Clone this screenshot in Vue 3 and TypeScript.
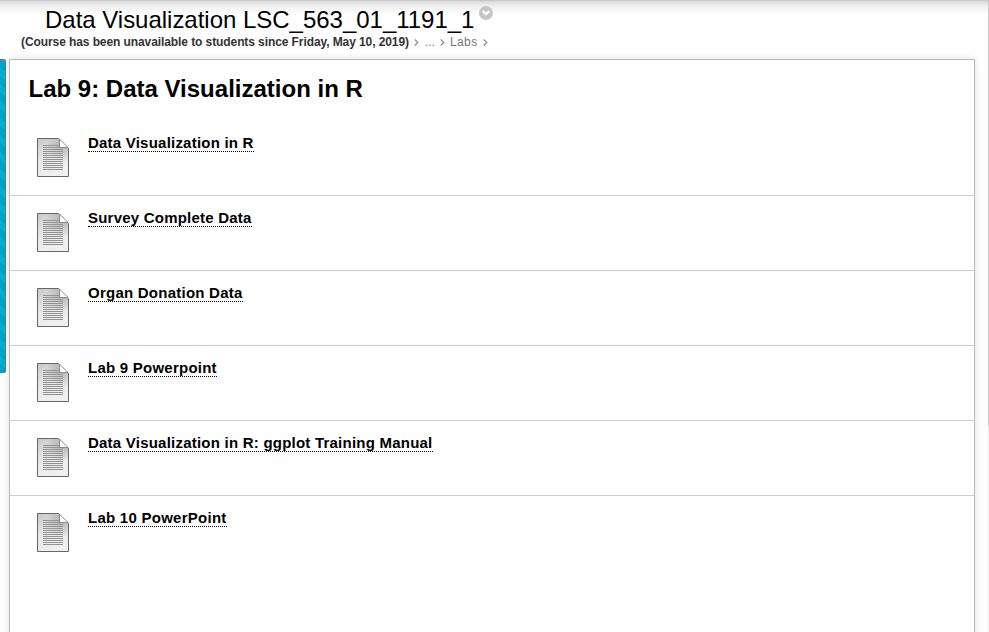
<script setup lang="ts">
interface ContentItem {
  id: number
  title: string
  spacing: number
}

const items: ContentItem[] = [
  { id: 1, title: 'Data Visualization in R', spacing: 0.22 },
  { id: 2, title: 'Survey Complete Data', spacing: 0.22 },
  { id: 3, title: 'Organ Donation Data', spacing: 0.24 },
  { id: 4, title: 'Lab 9 Powerpoint', spacing: 0.24 },
  { id: 5, title: 'Data Visualization in R: ggplot Training Manual', spacing: 0.225 },
  { id: 6, title: 'Lab 10 PowerPoint', spacing: 0.26 },
]
const lines: number[] = Array.from({ length: 13 }, (_, i) => 7 + i * 2)
</script>

<template>
  <div class="page">
    <header class="header">
      <div class="course">
        <h1>Data Visualization LSC_563_01_1191_1</h1>
        <svg class="toggle" width="14" height="14" viewBox="0 0 14 14">
          <circle cx="7" cy="7" r="7" fill="#c6c6c6" />
          <path d="M3.8 5.2 7 8.2l3.2-3" fill="none" stroke="#fff" stroke-width="2.4" />
        </svg>
      </div>
      <nav class="crumbs">
        <strong>(Course has been unavailable to students since Friday, May 10, 2019)</strong>
        <svg class="sep" width="5" height="7" viewBox="0 0 5 7"><path d="M.7.5 3.8 3.5.7 6.5" /></svg>
        <a class="dots">...</a>
        <svg class="sep" width="5" height="7" viewBox="0 0 5 7"><path d="M.7.5 3.8 3.5.7 6.5" /></svg>
        <a class="labs">Labs</a>
        <svg class="sep" width="5" height="7" viewBox="0 0 5 7"><path d="M.7.5 3.8 3.5.7 6.5" /></svg>
      </nav>
    </header>
    <div class="body">
      <aside class="rail"></aside>
      <main class="panel">
        <h2>Lab 9: Data Visualization in R</h2>
        <ul>
          <li v-for="item in items" :key="item.id">
            <svg class="doc" width="32" height="39" viewBox="0 0 32 39">
              <defs>
                <linearGradient :id="`paper${item.id}`" x1="0" y1="0" x2=".45" y2="1">
                  <stop offset="0" stop-color="#c8c8c8" />
                  <stop offset=".5" stop-color="#e6e6e6" />
                  <stop offset="1" stop-color="#f0f0f0" />
                </linearGradient>
                <radialGradient :id="`shade${item.id}`" gradientUnits="userSpaceOnUse" cx="26" cy="7" r="17">
                  <stop offset="0" stop-color="#999" stop-opacity=".7" />
                  <stop offset="1" stop-color="#999" stop-opacity="0" />
                </radialGradient>
              </defs>
              <path d="M.5.5h21l10 10v28H.5z" :fill="`url(#paper${item.id})`" />
              <path d="M.5.5h21l10 10v28H.5z" :fill="`url(#shade${item.id})`" stroke="#666" />
              <rect v-for="y in lines" :key="y" x="6" :y="y" width="20" height="1" fill="#949294" />
              <path d="M22.5 1v8.5H31z" fill="#fff" stroke="#777" stroke-width=".8" />
            </svg>
            <a class="link" :style="{ letterSpacing: `${item.spacing}px` }">{{ item.title }}</a>
          </li>
        </ul>
      </main>
    </div>
    <div class="edge"></div>
  </div>
</template>

<style>
body {
  margin: 0;
  background: #fff;
  overflow: hidden;
}
</style>

<style scoped>
.page {
  position: relative;
  display: flex;
  flex-direction: column;
  width: 989px;
  height: 632px;
  overflow: hidden;
  font-family: "Liberation Sans", Arial, sans-serif;
  color: #000;
}
.header {
  box-sizing: border-box;
  height: 59px;
  padding-top: 6px;
  background: linear-gradient(#c3c3c3 0, #dedede 2px, #efefef 6px, #fafafa 12px, #fff 16px);
}
.course {
  display: flex;
  height: 28px;
  padding-left: 45px;
}
h1 {
  margin: 0;
  font-size: 24px;
  font-weight: 400;
  line-height: 28px;
  letter-spacing: -0.02px;
  white-space: nowrap;
}
.toggle {
  margin-left: 5px;
}
.crumbs {
  display: flex;
  align-items: center;
  height: 16px;
  padding-left: 21px;
  font-size: 12px;
  line-height: 16px;
  color: #777;
  white-space: nowrap;
}
.crumbs strong {
  color: #333;
  letter-spacing: -0.088px;
}
.sep {
  flex: none;
  margin: 1px 0 0 5px;
  fill: none;
  stroke: #888;
  stroke-width: 1.1;
}
.dots {
  margin-left: 6px;
}
.dots + .sep {
  margin-left: 5px;
}
.labs {
  margin-left: 5px;
  letter-spacing: 0.4px;
}
.body {
  display: flex;
  flex: 1;
  min-height: 0;
}
.rail {
  box-sizing: border-box;
  width: 6px;
  height: 314px;
  border: solid #5f7f87;
  border-width: 1px 1px 1px 0;
  border-radius: 0 2px 2px 0;
  background: repeating-linear-gradient(45deg, #00a2c8 0 6px, #0aadd0 6px 12px);
}
.panel {
  box-sizing: border-box;
  width: 966px;
  height: 600px;
  margin-left: 3px;
  border: 1px solid #bbb;
  background: #fff;
  box-shadow: 0 0 8px rgba(0, 0, 0, 0.12);
}
h2 {
  height: 61px;
  margin: 0;
  padding: 15px 0 0 18.5px;
  box-sizing: border-box;
  font-size: 24px;
  line-height: 28px;
  white-space: nowrap;
}
ul {
  margin: 0;
  padding: 0;
  list-style: none;
}
li {
  box-sizing: border-box;
  display: flex;
  align-items: flex-start;
  height: 75px;
  padding: 17px 0 0 27px;
  border-bottom: 1px solid #ccc;
}
li:last-child {
  border-bottom: 0;
}
.doc {
  flex: none;
}
.link {
  height: 17px;
  margin: -4px 0 0 19px;
  border-bottom: 1px dotted #000;
  font-size: 15px;
  font-weight: 700;
  line-height: 18px;
  white-space: nowrap;
}
.edge {
  position: absolute;
  top: 0;
  right: 0;
  width: 1px;
  height: 426px;
  background: #c8c8c8;
  box-shadow: 0 206px #eee;
}
</style>
